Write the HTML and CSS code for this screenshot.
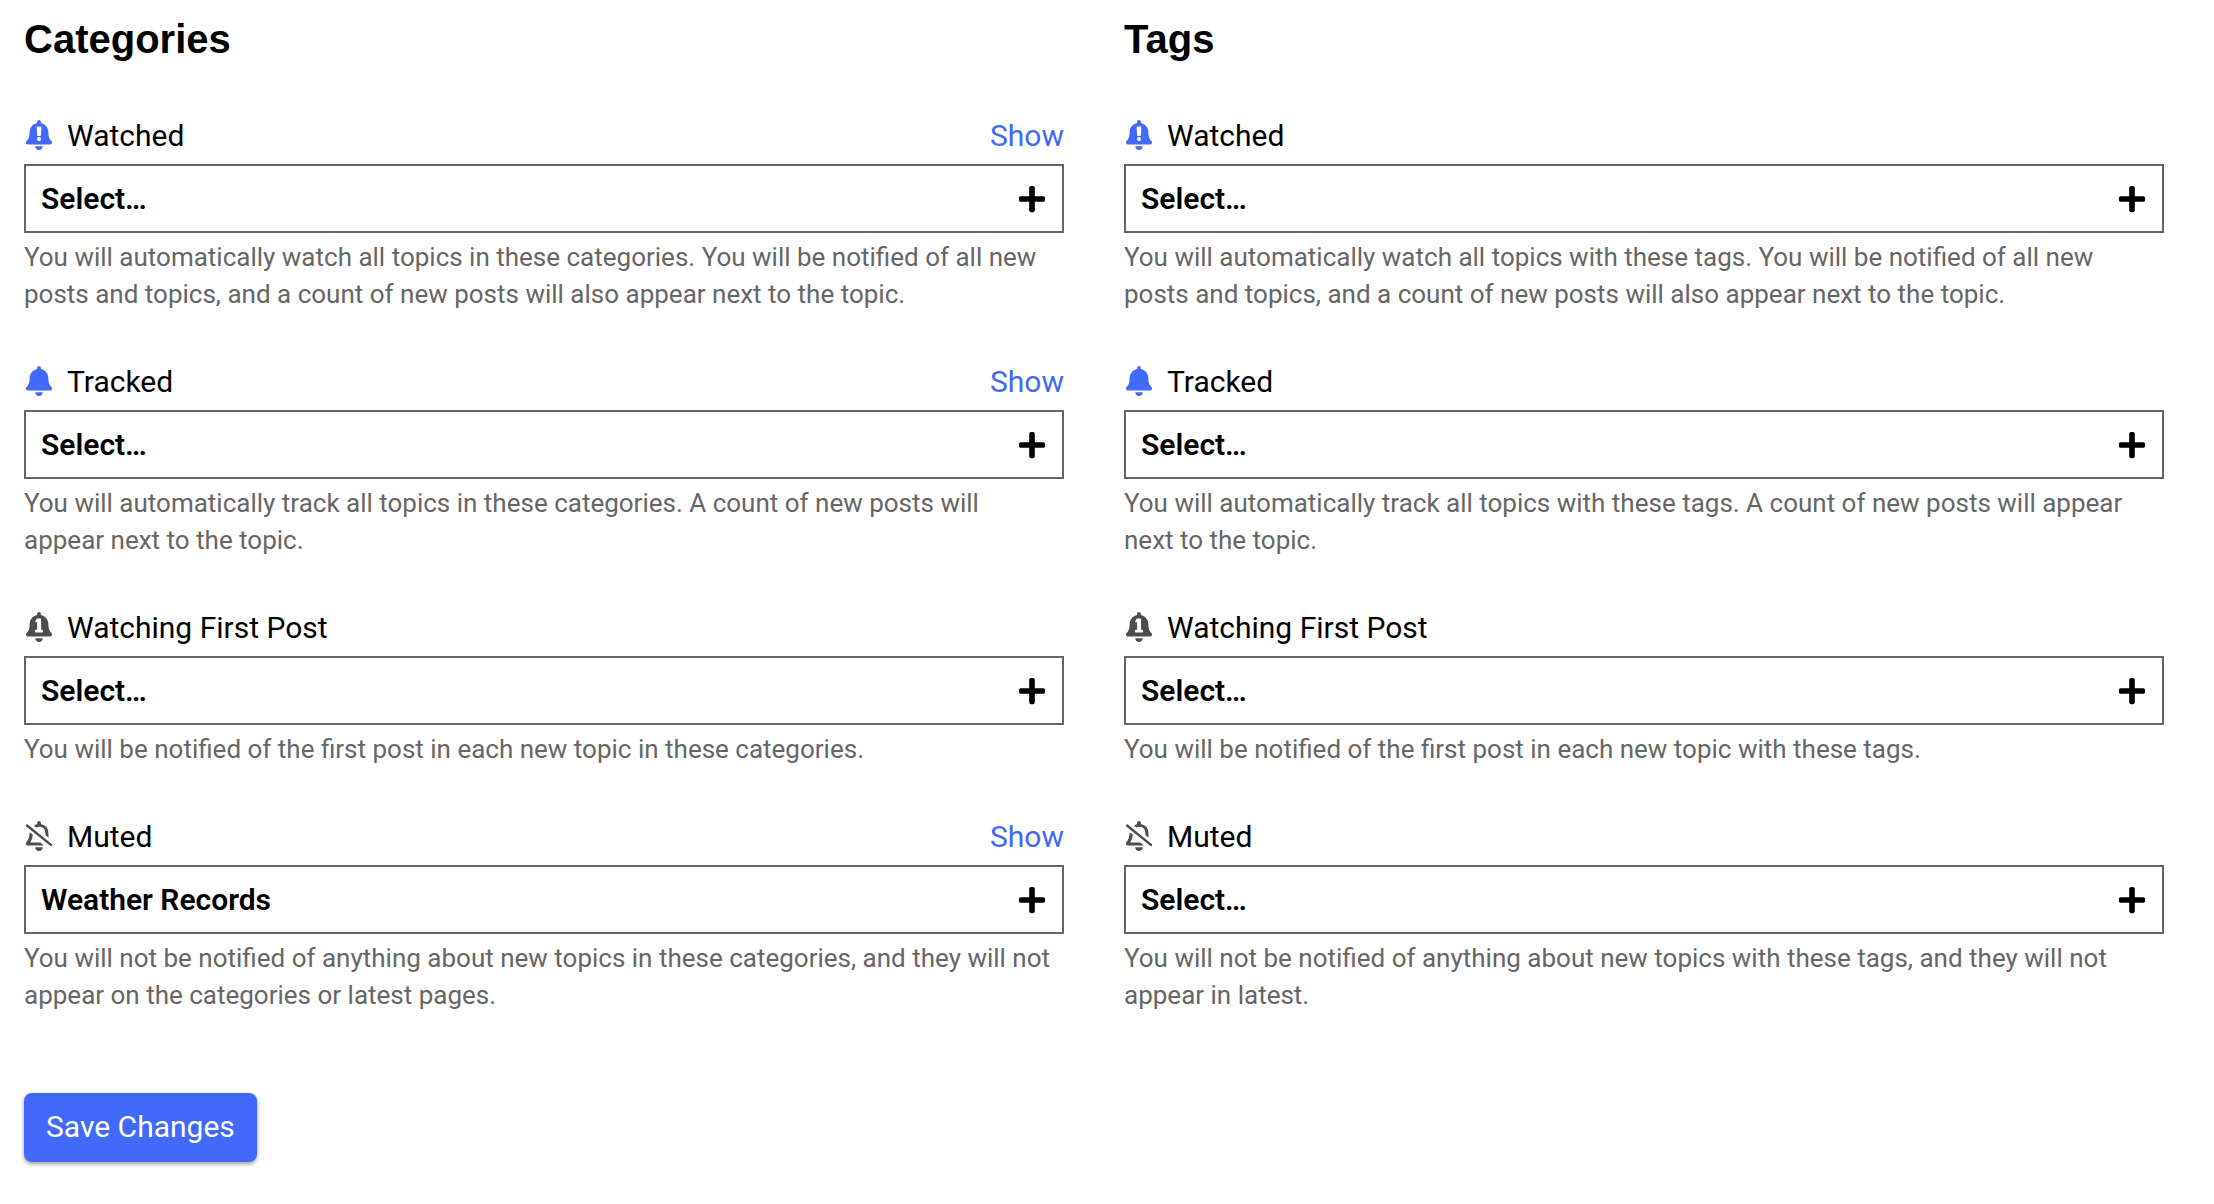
FILE: index.html
```html
<!DOCTYPE html>
<html lang="en">
<head>
<meta charset="utf-8">
<meta name="viewport" content="width=device-width, initial-scale=1">
<title>Tracking preferences</title>
<link rel="stylesheet" href="styles.css">
</head>
<body>
<svg class="sprite" aria-hidden="true">
  <symbol id="bell" viewBox="0 0 448 512"><path d="M224 512c35.32 0 63.97-28.65 63.97-64H160.03c0 35.35 28.65 64 63.97 64zm215.39-149.71c-19.32-20.76-55.47-51.99-55.47-154.29 0-77.7-54.48-139.9-127.94-155.16V32c0-17.67-14.32-32-31.98-32s-31.98 14.33-31.98 32v20.84C118.56 68.1 64.08 130.3 64.08 208c0 102.3-36.15 133.53-55.47 154.29-6 6.45-8.66 14.16-8.61 21.71.11 16.4 12.98 32 32.1 32h383.8c19.12 0 32-15.6 32.1-32 .05-7.55-2.61-15.27-8.61-21.71z"/></symbol>
  <symbol id="bell-watching" viewBox="0 0 448 512"><use href="#bell"/><path class="cutout" d="M198 112h52q15 0 14 14l-8 134q-1 12-12 12h-40q-11 0-12-12l-8-134q-1-14 14-14z"/><circle class="cutout" cx="224" cy="326" r="35"/></symbol>
  <symbol id="bell-first" viewBox="0 0 448 512"><use href="#bell"/><path class="cutout" d="M202 110h46q12 0 12 12v180h20q12 0 12 12v24q0 12-12 12H168q-12 0-12-12v-24q0-12 12-12h24V176h-20q-18 0-12-16l16-36q6-14 26-14z"/></symbol>
  <symbol id="bell-muted" viewBox="0 0 448 512"><path d="M224 512c35.320 0 63.970-28.650 63.970-64H160.030c0 35.350 28.650 64 63.970 64z"/><path d="M140 84q24-22 52-31V32q0-32 32-32t32 32v21q128 28 128 155 0 42 8 78l-56-44q-2-16-2-34 0-112-106-112-28 0-50 14z"/><path d="M65 192l52 40q-6 90-42 136h170l62 48H32q-32 0-32-32 0-12 9-22 50-50 56-170z"/><path class="slash" d="M20 76L428 408"/></symbol>
  <symbol id="plus" viewBox="0 0 448 512"><path d="M416 208H272V64c0-17.670-14.330-32-32-32h-32c-17.670 0-32 14.330-32 32v144H32c-17.670 0-32 14.330-32 32v32c0 17.670 14.330 32 32 32h144v144c0 17.670 14.330 32 32 32h32c17.670 0 32-14.330 32-32V304h144c17.670 0 32-14.330 32-32v-32c0-17.670-14.330-32-32-32z"/></symbol>
</svg>
<form class="preferences">
  <div class="columns">
    <section class="column">
      <h2 class="title">Categories</h2>
      <div class="control">
        <div class="head"><label class="label" for="cat-watched"><svg class="icon accent"><use href="#bell-watching"/></svg>Watched</label><a class="show" href="#watched">Show</a></div>
        <div class="picker"><select class="select" id="cat-watched"><option>Select…</option></select><svg class="icon plus"><use href="#plus"/></svg></div>
        <p class="hint">You will automatically watch all topics in these categories. You will be notified of all new posts and topics, and a count of new posts will also appear next to the topic.</p>
      </div>
      <div class="control">
        <div class="head"><label class="label" for="cat-tracked"><svg class="icon accent"><use href="#bell"/></svg>Tracked</label><a class="show" href="#tracked">Show</a></div>
        <div class="picker"><select class="select" id="cat-tracked"><option>Select…</option></select><svg class="icon plus"><use href="#plus"/></svg></div>
        <p class="hint">You will automatically track all topics in these categories. A count of new posts will appear next to the topic.</p>
      </div>
      <div class="control">
        <div class="head"><label class="label" for="cat-first"><svg class="icon"><use href="#bell-first"/></svg>Watching First Post</label></div>
        <div class="picker"><select class="select" id="cat-first"><option>Select…</option></select><svg class="icon plus"><use href="#plus"/></svg></div>
        <p class="hint">You will be notified of the first post in each new topic in these categories.</p>
      </div>
      <div class="control">
        <div class="head"><label class="label" for="cat-muted"><svg class="icon"><use href="#bell-muted"/></svg>Muted</label><a class="show" href="#muted">Show</a></div>
        <div class="picker"><select class="select" id="cat-muted"><option>Weather Records</option></select><svg class="icon plus"><use href="#plus"/></svg></div>
        <p class="hint">You will not be notified of anything about new topics in these categories, and they will not appear on the categories or latest pages.</p>
      </div>
    </section>
    <section class="column">
      <h2 class="title">Tags</h2>
      <div class="control">
        <div class="head"><label class="label" for="tag-watched"><svg class="icon accent"><use href="#bell-watching"/></svg>Watched</label></div>
        <div class="picker"><select class="select" id="tag-watched"><option>Select…</option></select><svg class="icon plus"><use href="#plus"/></svg></div>
        <p class="hint">You will automatically watch all topics with these tags. You will be notified of all new posts and topics, and a count of new posts will also appear next to the topic.</p>
      </div>
      <div class="control">
        <div class="head"><label class="label" for="tag-tracked"><svg class="icon accent"><use href="#bell"/></svg>Tracked</label></div>
        <div class="picker"><select class="select" id="tag-tracked"><option>Select…</option></select><svg class="icon plus"><use href="#plus"/></svg></div>
        <p class="hint">You will automatically track all topics with these tags. A count of new posts will appear next to the topic.</p>
      </div>
      <div class="control">
        <div class="head"><label class="label" for="tag-first"><svg class="icon"><use href="#bell-first"/></svg>Watching First Post</label></div>
        <div class="picker"><select class="select" id="tag-first"><option>Select…</option></select><svg class="icon plus"><use href="#plus"/></svg></div>
        <p class="hint">You will be notified of the first post in each new topic with these tags.</p>
      </div>
      <div class="control">
        <div class="head"><label class="label" for="tag-muted"><svg class="icon"><use href="#bell-muted"/></svg>Muted</label></div>
        <div class="picker"><select class="select" id="tag-muted"><option>Select…</option></select><svg class="icon plus"><use href="#plus"/></svg></div>
        <p class="hint">You will not be notified of anything about new topics with these tags, and they will not appear in latest.</p>
      </div>
    </section>
  </div>
  <button class="save" type="submit">Save Changes</button>
</form>
</body>
</html>
```
FILE: styles.css
```css
:root {
  --accent: #4169fa;
  --muted: #666;
}

* {
  box-sizing: border-box;
}

body {
  margin: 0;
  background: #fff;
  color: #000;
  font: 30px/42px Roboto, "Liberation Sans", sans-serif;
}

.sprite {
  display: block;
  width: 0;
  height: 0;
}

.preferences {
  padding: 15px 50px 40px 24px;
}

.columns {
  display: grid;
  grid-template-columns: 1fr 1fr;
  gap: 60px;
}

.title {
  margin: 0 0 52px;
  font: bold 40px/48px "Liberation Sans", Arial, sans-serif;
}

.control {
  margin-bottom: 48px;
}

.head {
  display: flex;
  justify-content: space-between;
  margin-bottom: 7px;
}

.label {
  display: flex;
  gap: 13px;
}

.icon {
  width: 30px;
  height: 30px;
  margin-top: 5px;
  fill: #4d4d4d;
  stroke: none;
}

.accent {
  fill: var(--accent);
}

.cutout {
  fill: #fff;
}

.slash {
  fill: none;
  stroke: #4d4d4d;
  stroke-width: 42;
  stroke-linecap: round;
}

.show {
  color: var(--accent);
  text-decoration: none;
}

.picker {
  display: grid;
  align-items: center;
}

.picker > * {
  grid-area: 1 / 1;
}

.select {
  appearance: none;
  width: 100%;
  height: 69px;
  padding: 0 15px;
  border: 2px solid var(--muted);
  border-radius: 0;
  background: #fff;
  color: #000;
  font: 600 30px/42px Roboto, "Liberation Sans", sans-serif;
}

.plus {
  justify-self: end;
  margin: 0 17px;
  fill: #000;
  pointer-events: none;
}

.hint {
  margin: 6px 0 0;
  color: var(--muted);
  font-size: 26px;
  line-height: 37px;
}

.save {
  margin-top: 31px;
  padding: 13px 22px 14px;
  border: 0;
  border-radius: 8px;
  background: var(--accent);
  box-shadow: 0 2px 4px rgb(0 0 0 / 40%);
  color: #fff;
  font: inherit;
}
```
